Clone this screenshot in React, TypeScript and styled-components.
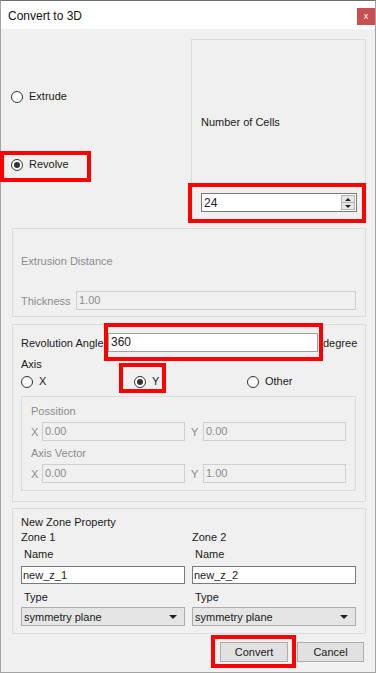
import React from "react";
import styled, { createGlobalStyle } from "styled-components";

const GlobalStyle = createGlobalStyle`
  html, body {
    margin: 0;
    padding: 0;
    background: #f0f0f0;
  }
  body {
    font-family: "Liberation Sans", Arial, sans-serif;
    font-size: 11px;
    color: #1a1a1a;
  }
  * {
    box-sizing: border-box;
  }
`;

type Offsets = { $t: number; $r: number; $b: number; $l: number };

const Radio = ({ label, checked }: { label: string; checked?: boolean }) => (
  <RadioRow>
    <RadioCircle $checked={checked} />
    <span>{label}</span>
  </RadioRow>
);

const SpinBox = ({ value }: { value: string }) => (
  <SpinField>
    <FieldText>{value}</FieldText>
    <SpinButtons>
      <SpinButton>
        <Arrow $up />
      </SpinButton>
      <SpinButton>
        <Arrow />
      </SpinButton>
    </SpinButtons>
  </SpinField>
);

const Select = ({ value }: { value: string }) => (
  <SelectBox>
    <span>{value}</span>
    <Arrow />
  </SelectBox>
);

const ZoneColumn = ({ title, name }: { title: string; name: string }) => (
  <ZoneCol>
    <Label $top={2}>{title}</Label>
    <Label $top={4} $indent={3}>
      Name
    </Label>
    <NameInput>{name}</NameInput>
    <Label $top={7} $indent={3}>
      Type
    </Label>
    <Select value="symmetry plane" />
  </ZoneCol>
);

export default function App() {
  return (
    <>
      <GlobalStyle />
      <Window>
        <TitleBar>
          <Title>Convert to 3D</Title>
          <CloseButton>x</CloseButton>
        </TitleBar>
        <Body>
          <TopSection>
            <ModeColumn>
              <Radio label="Extrude" />
              <Highlight $t={7} $l={11} $b={11} $r={22} style={{ marginTop: 55 }}>
                <Radio label="Revolve" checked />
              </Highlight>
            </ModeColumn>
            <CellsBox>
              <Label $top={76}>Number of Cells</Label>
              <Highlight $t={10} $l={13} $b={11} $r={9} style={{ marginTop: 64 }}>
                <SpinBox value="24" />
              </Highlight>
            </CellsBox>
          </TopSection>

          <GroupBox $top={8} $pad="26px 9px 0 8px" $height={89}>
            <Label $disabled>Extrusion Distance</Label>
            <FieldRow $top={23}>
              <RowLabel $w={55} $disabled>
                Thickness
              </RowLabel>
              <DisabledField $grow>1.00</DisabledField>
            </FieldRow>
          </GroupBox>

          <GroupBox $top={7} $pad="8px 9px 10px 8px">
            <FieldRow>
              <RowLabel $w={87}>Revolution Angle</RowLabel>
              <Highlight $t={10} $l={4} $b={9} $r={5}>
                <TextInput $w={210}>360</TextInput>
              </Highlight>
              <Unit>degree</Unit>
            </FieldRow>
            <Label $top={6}>Axis</Label>
            <AxisRow>
              <Radio label="X" />
              <Highlight $t={12} $l={15} $b={5} $r={7}>
                <Radio label="Y" checked />
              </Highlight>
              <Radio label="Other" />
            </AxisRow>
            <SubGroup>
              <Label $disabled>Possition</Label>
              <FieldRow $top={4}>
                <RowLabel $w={11} $disabled>
                  X
                </RowLabel>
                <DisabledField $w={143}>0.00</DisabledField>
                <RowLabel $w={18} $disabled $indent={6}>
                  Y
                </RowLabel>
                <DisabledField $w={143}>0.00</DisabledField>
              </FieldRow>
              <Label $top={6} $disabled>
                Axis Vector
              </Label>
              <FieldRow $top={4}>
                <RowLabel $w={11} $disabled>
                  X
                </RowLabel>
                <DisabledField $w={143}>0.00</DisabledField>
                <RowLabel $w={18} $disabled $indent={6}>
                  Y
                </RowLabel>
                <DisabledField $w={143}>1.00</DisabledField>
              </FieldRow>
            </SubGroup>
          </GroupBox>

          <GroupBox $top={6} $pad="7px 9px 7px 8px">
            <Label>New Zone Property</Label>
            <ZoneGrid>
              <ZoneColumn title="Zone 1" name="new_z_1" />
              <ZoneColumn title="Zone 2" name="new_z_2" />
            </ZoneGrid>
          </GroupBox>

          <ButtonRow>
            <Highlight $t={7} $l={9} $b={6} $r={8}>
              <PushButton $w={68}>Convert</PushButton>
            </Highlight>
            <PushButton $w={67}>Cancel</PushButton>
          </ButtonRow>
        </Body>
      </Window>
    </>
  );
}

const Window = styled.div`
  width: 376px;
  height: 673px;
  border: 1px solid #a3a3a3;
  border-top-color: #6f6f6f;
  background: #f0f0f0;
  display: flex;
  flex-direction: column;
`;

const TitleBar = styled.div`
  height: 28px;
  flex-shrink: 0;
  background: #fff;
  display: flex;
  align-items: flex-start;
  justify-content: space-between;
`;

const Title = styled.span`
  margin: 8px 0 0 7px;
  font-size: 12px;
  line-height: 14px;
  color: #111;
`;

const CloseButton = styled.div`
  width: 18px;
  height: 17px;
  margin-top: 7px;
  background: #c75050;
  color: #fff;
  font-size: 9px;
  line-height: 16px;
  text-align: center;
`;

const Body = styled.div`
  display: flex;
  flex-direction: column;
  padding: 0 9px 0 11px;
`;

const Highlight = styled.div<Offsets>`
  position: relative;
  display: flex;
  width: fit-content;

  &::after {
    content: "";
    position: absolute;
    top: ${(p) => -p.$t}px;
    right: ${(p) => -p.$r}px;
    bottom: ${(p) => -p.$b}px;
    left: ${(p) => -p.$l}px;
    border: 4px solid #ff0000;
    pointer-events: none;
  }
`;

const TopSection = styled.div`
  display: grid;
  grid-template-columns: 179px 175px;
`;

const ModeColumn = styled.div`
  display: flex;
  flex-direction: column;
  align-items: flex-start;
  padding-top: 61px;
  margin-left: -1px;
`;

const RadioRow = styled.div`
  display: flex;
  align-items: center;
  gap: 6px;
  height: 13px;
  line-height: 13px;
`;

const RadioCircle = styled.span<{ $checked?: boolean }>`
  width: 12px;
  height: 12px;
  border-radius: 50%;
  border: 1px solid #333;
  background: #fff;
  display: flex;
  align-items: center;
  justify-content: center;

  &::after {
    content: "";
    width: 6px;
    height: 6px;
    border-radius: 50%;
    background: ${(p) => (p.$checked ? "#333" : "transparent")};
  }
`;

const CellsBox = styled.div`
  margin-top: 10px;
  height: 181px;
  border: 1px solid #dcdcdc;
  padding: 0 8px 0 9px;
  display: flex;
  flex-direction: column;
`;

const Label = styled.div<{ $top?: number; $disabled?: boolean; $indent?: number }>`
  margin-top: ${(p) => p.$top ?? 0}px;
  padding-left: ${(p) => p.$indent ?? 0}px;
  line-height: 13px;
  color: ${(p) => (p.$disabled ? "#8c8c8c" : "#1a1a1a")};
  white-space: nowrap;
`;

const SpinField = styled.div`
  width: 156px;
  height: 19px;
  border: 1px solid #7a7a7a;
  background: #fff;
  display: flex;
  align-items: center;
  justify-content: space-between;
`;

const FieldText = styled.span`
  padding-left: 2px;
  font-size: 12px;
`;

const SpinButtons = styled.div`
  width: 14px;
  height: 15px;
  margin-right: 1px;
  display: flex;
  flex-direction: column;
`;

const SpinButton = styled.div`
  flex: 1;
  background: #e6e6e6;
  border: 1px solid #b5b5b5;
  display: flex;
  align-items: center;
  justify-content: center;

  & + & {
    border-top: none;
  }
`;

const Arrow = styled.span<{ $up?: boolean }>`
  width: 0;
  height: 0;
  border-left: 3px solid transparent;
  border-right: 3px solid transparent;
  ${(p) => (p.$up ? "border-bottom: 3px solid #222;" : "border-top: 3px solid #222;")}
`;

const GroupBox = styled.div<{ $top: number; $pad: string; $height?: number }>`
  margin-top: ${(p) => p.$top}px;
  padding: ${(p) => p.$pad};
  ${(p) => (p.$height ? `height: ${p.$height}px;` : "")}
  border: 1px solid #dcdcdc;
  display: flex;
  flex-direction: column;
`;

const FieldRow = styled.div<{ $top?: number }>`
  margin-top: ${(p) => p.$top ?? 0}px;
  display: flex;
  align-items: center;
`;

const RowLabel = styled.span<{ $w: number; $disabled?: boolean; $indent?: number }>`
  width: ${(p) => p.$w}px;
  flex-shrink: 0;
  padding-left: ${(p) => p.$indent ?? 0}px;
  color: ${(p) => (p.$disabled ? "#8c8c8c" : "#1a1a1a")};
  white-space: nowrap;
`;

const DisabledField = styled.div<{ $w?: number; $grow?: boolean }>`
  ${(p) => (p.$grow ? "flex: 1;" : `width: ${p.$w}px;`)}
  height: 19px;
  border: 1px solid #cfcfcf;
  background: #f0f0f0;
  color: #8c8c8c;
  padding-left: 2px;
  line-height: 17px;
  font-size: 11px;
`;

const TextInput = styled.div<{ $w: number }>`
  width: ${(p) => p.$w}px;
  height: 19px;
  border: 1px solid #a0a0a0;
  background: #fff;
  padding-left: 2px;
  line-height: 17px;
  font-size: 12px;
`;

const Unit = styled.span`
  margin-left: 5px;
`;

const AxisRow = styled.div`
  margin-top: 4px;
  display: grid;
  grid-template-columns: 113px 113px 113px;
`;

const SubGroup = styled.div`
  margin-top: 8px;
  border: 1px solid #dcdcdc;
  padding: 8px 9px 7px 9px;
  display: flex;
  flex-direction: column;
`;

const ZoneGrid = styled.div`
  display: grid;
  grid-template-columns: 164px 164px;
  column-gap: 7px;
`;

const ZoneCol = styled.div`
  display: flex;
  flex-direction: column;
`;

const NameInput = styled.div`
  margin-top: 5px;
  height: 18px;
  border: 1px solid #7a7a7a;
  background: #fff;
  padding-left: 1px;
  line-height: 16px;
  font-size: 11px;
`;

const SelectBox = styled.div`
  margin-top: 3px;
  height: 19px;
  border: 1px solid #acacac;
  background: #e5e5e5;
  display: flex;
  align-items: center;
  justify-content: space-between;
  padding: 0 7px 0 2px;

  & > span:last-child {
    border-left-width: 4px;
    border-right-width: 4px;
    border-top-width: 4px;
  }
`;

const ButtonRow = styled.div`
  margin-top: 8px;
  padding-right: 2px;
  display: flex;
  justify-content: flex-end;
  gap: 9px;
`;

const PushButton = styled.div<{ $w: number }>`
  width: ${(p) => p.$w}px;
  height: 20px;
  border: 1px solid #adadad;
  background: #e1e1e1;
  text-align: center;
  line-height: 18px;
  font-size: 11px;
`;
